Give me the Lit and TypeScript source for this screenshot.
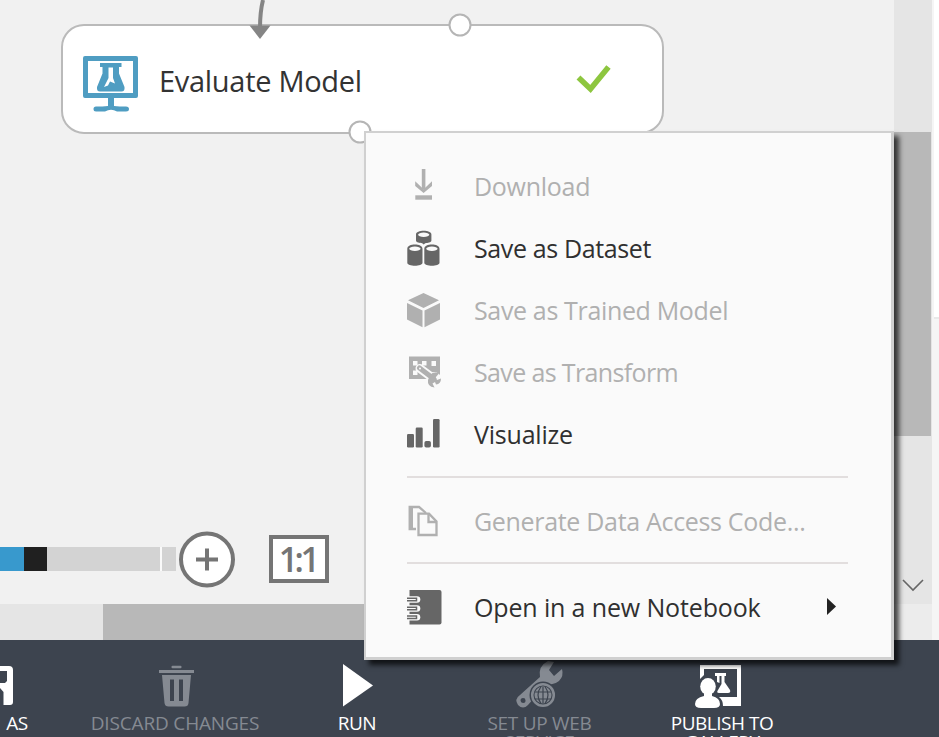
import { LitElement, html, css, svg, nothing } from "lit";
import { customElement, property } from "lit/decorators.js";
import { classMap } from "lit/directives/class-map.js";

const icons: Record<string, unknown> = {
  download: svg`<g fill="currentColor"><rect x="15.8" y="1" width="3.6" height="20"/><path d="M9.2 13.2l8.4 8 8.4-8v4.9l-8.4 7-8.4-7z"/><rect x="9.3" y="27.3" width="16.7" height="4.4"/></g>`,
  dataset: svg`<g fill="currentColor"><path d="M10 4.6c0-5 15.4-5 15.4 0v6c0 2-4 2.5-6.2 2.6L17.700 14.600l-1.500-1.400C14 13.100 10 12.600 10 10.600z"/><path d="M1.300 18.700c0-5.600 15.200-5.600 15.200 0v14c0 4-15.200 4-15.200 0zM18.300 18.700c0-5.600 15.200-5.600 15.200 0v14c0 4-15.200 4-15.200 0z"/></g><g fill="#fafafa"><ellipse cx="17.700" cy="4.700" rx="5.600" ry="2.200"/><ellipse cx="8.900" cy="18.700" rx="5.700" ry="2.200"/><ellipse cx="25.900" cy="18.700" rx="5.700" ry="2.200"/></g>`,
  cube: svg`<g fill="currentColor"><path d="M17.500 1L33 8.200 17.500 16 2 8.200zM1 11l15.500 7.600V35.300L1 27.500zM34 11l-15.500 7.600V35.300L34 27.500z"/></g>`,
  transform: svg`<path fill="currentColor" d="M3 2.500h31v22.500H3z"/><g fill="#fafafa"><rect x="7" y="7" width="4.500" height="4.500"/><rect x="16" y="7" width="4.500" height="4.500"/><rect x="25.500" y="7" width="4.500" height="5"/><rect x="7" y="16.500" width="4.500" height="4.500"/></g><g fill="none" stroke="#fafafa" stroke-linecap="round"><path d="M14 14.500L28 25" stroke-width="9"/><path d="M28 25L30 27" stroke-width="14"/></g><g stroke="currentColor" stroke-linecap="round" fill="currentColor"><path d="M13.500 14L28 25" stroke-width="5"/><path stroke="none" d="M24 21Q28 17 33 19.500L29.500 23.500 31 26 35 24.500Q35 30 30 30.500L29 28 26.500 29.500 28.500 33.500Q21 32.500 22 26z"/></g><circle cx="14" cy="14.500" r="1" fill="#fafafa"/>`,
  bars: svg`<g fill="currentColor"><rect x="1" y="18" width="7" height="13.500" rx="1.200"/><rect x="9.700" y="11.600" width="7" height="19.900" rx="1.200"/><rect x="18.400" y="25" width="6.500" height="6.500" rx="1.800"/><rect x="27" y="3" width="6.600" height="28.500" rx="1.200"/></g>`,
  code: svg`<g fill="none" stroke="currentColor" stroke-width="2.300"><path d="M10 26H3.700V4H13l7 6"/><path d="M5 5v20" stroke-width="4"/><path d="M12.500 10.700h10.500l7.500 7.800v13.500h-18z" fill="#fafafa"/><path d="M22.500 11v8h8"/></g>`,
  notebook: svg`<path fill="currentColor" d="M3.500 1H33.500a2 2 0 0 1 2 2V33.500a2 2 0 0 1-2 2H3.500z"/>${[10.5, 19.5, 28.3].map(
    (y) => svg`<path d="M1 ${y}H11" stroke="#fafafa" stroke-width="6.600" stroke-linecap="round"/><path d="M0 ${y}H3" stroke="#fafafa" stroke-width="6.600"/><path d="M1 ${y - 1.2}H10.500v2.400H1" fill="none" stroke="currentColor" stroke-width="1.500"/>`
  )}`,
};

interface Item { icon: string; label: string; ls: number; off?: boolean; more?: boolean }
const groups: Item[][] = [
  [
    { icon: "download", label: "Download", ls: -0.28, off: true },
    { icon: "dataset", label: "Save as Dataset", ls: -0.37 },
    { icon: "cube", label: "Save as Trained Model", ls: -0.35, off: true },
    { icon: "transform", label: "Save as Transform", ls: -0.64, off: true },
    { icon: "bars", label: "Visualize", ls: -0.2 },
  ],
  [{ icon: "code", label: "Generate Data Access Code...", ls: -0.32, off: true }],
  [{ icon: "notebook", label: "Open in a new Notebook", ls: -0.14, more: true }],
];

@customElement("context-menu")
class ContextMenu extends LitElement {
  static styles = css`
    :host { display: block; box-sizing: border-box; border: 2px solid #d0d0d0; border-right-width: 3px; border-bottom-width: 3px;
      background: #fafafa; padding: 22px 43px 0 41px; box-shadow: 5px 5px 5px rgba(0, 0, 0, 0.72); }
    .row { height: 62.2px; display: flex; align-items: center; color: #303030; font-size: 25px; white-space: nowrap; }
    .row.off { color: #b0b0b0; }
    .icon { width: 36px; height: 36px; flex: none; margin: -1px 32px 0 -1px; color: #666; }
    .off .icon { color: #b0b0b0; }
    .label { flex: 1; margin-top: -1px; }
    .more { width: 9px; height: 17px; margin: -2px 12px 0 0; fill: #222; }
    .sep { height: 2px; margin: 10px 0 12px; background: #e2dede; }
  `;
  render() {
    return groups.map((g, i) => html`
      ${i ? html`<div class="sep"></div>` : nothing}
      ${g.map((it) => html`<div class=${classMap({ row: true, off: !!it.off })}>
        <svg class="icon" viewBox="0 0 36 36">${icons[it.icon]}</svg>
        <span class="label" style="letter-spacing:${it.ls}px">${it.label}</span>
        ${it.more ? html`<svg class="more" viewBox="0 0 9 17"><path d="M0 0l9 8.500L0 17z"/></svg>` : nothing}
      </div>`)}`);
  }
}

@customElement("tool-button")
class ToolButton extends LitElement {
  @property() label = "";
  @property() second = "";
  @property({ type: Number }) spacing = 0;
  static styles = css`
    :host { display: flex; flex-direction: column; align-items: center; color: #fff; font-size: 19px; line-height: 19px; white-space: nowrap; }
    :host([off]) { color: #858a92; }
    .art { height: 50px; margin-bottom: 3px; }
  `;
  render() {
    return html`<div class="art"><slot></slot></div>
      ${[this.label, this.second].filter(Boolean).map((t) => html`<span style="letter-spacing:${this.spacing}px">${t}</span>`)}`;
  }
}

@customElement("app-root")
class AppRoot extends LitElement {
  static styles = css`
    :host { display: block; position: relative; width: 939px; height: 737px; overflow: hidden; background: #f1f1f1;
      font-family: "Open Sans", "Noto Sans", sans-serif; }
    .page { display: grid; grid-template: 604px 36px 97px / 894px 38px 7px; }
    .canvas { position: relative; background: #f1f1f1; overflow: hidden; }
    .wires { position: absolute; inset: 0; }
    .node { position: absolute; left: 61px; top: 24px; width: 603px; height: 110px; box-sizing: border-box; display: flex; align-items: center;
      border: 2px solid #bababa; border-radius: 23px; background: #fff; padding: 2px 50px 0 19px; }
    .monitor { width: 57px; height: 57px; margin-right: 20px; margin-top: 8px; }
    .name { flex: 1; font-size: 29px; color: #333; white-space: nowrap; letter-spacing: -0.3px; margin-top: 1px; }
    .check { width: 36px; height: 30px; margin-top: -3px; }
    .zoom { position: absolute; left: 0; top: 531px; height: 57px; display: flex; align-items: center; }
    .fill, .knob, .track, .cap { height: 24px; margin-top: -1px; background: #d3d3d3; }
    .fill { width: 24px; background: #3899cd; }
    .knob { width: 23px; background: #202020; }
    .track { width: 113px; border-right: 2px solid #fafafa; }
    .cap { width: 14px; margin-right: 3px; }
    .plus { width: 56px; height: 57px; }
    .ratio { box-sizing: border-box; width: 60px; height: 48px; margin: 0 0 1px 34px; border: 4px solid #757575; background: #fff; color: #757575;
      font: 600 34px/40px "Open Sans", sans-serif; text-align: center; letter-spacing: -3.500px; text-indent: -3px; }
    .vbar { background: #e5e5e5; display: flex; flex-direction: column; justify-content: space-between; }
    .vthumb { width: 37px; height: 304px; margin-top: 132px; background: #b8b8b8; }
    .chev { width: 22px; height: 14px; margin: 0 0 12px 8px; fill: none; stroke: #666; stroke-width: 1.6; }
    .edge { grid-row: 1 / 3; grid-column: 3; background: #f5f5f5; }
    .edge-top { height: 317px; margin-left: 2px; background: #fff; border-bottom: 2px solid #e9e9e9; }
    .hbar { background: #e5e5e5; display: flex; }
    .hthumb { margin-left: 103px; flex: 1; background: #b8b8b8; }
    .corner { background: #ececec; }
    .tools { grid-column: 1 / 4; background: #3d444f; display: grid; align-items: start; padding-top: 21px; height: 76px; overflow: hidden;
      grid-template-columns: 84px 182px 182px 183px 182px; }
    .tools tool-button { margin: 0 -20px; }
    .tools .save { margin: 0 0 0 -100px; word-spacing: 3px; }
    .save .glyph { margin-left: 3px; }
    .glyph { width: 50px; height: 50px; display: block; overflow: visible; }
    context-menu { position: absolute; left: 364px; top: 131px; width: 530px; height: 529px; }
  `;
  render() {
    return html`
      <div class="page">
        <div class="canvas">
          <div class="node">
            <svg class="monitor" viewBox="0 0 57 57" fill="#4f9dc2">
              <path fill-rule="evenodd" d="M3 0H54a2 2 0 0 1 2 2V40a2 2 0 0 1-2 2H32v8c4 .500 7 .500 12 .500q3 0 3 2.500t-3 2.500H35q-6-3.500-12 0H14q-2.500 0-2.500-2.500T14 50.500c5 0 8 0 12-.500v-8H3a2 2 0 0 1-2-2V2A2 2 0 0 1 3 0zM6 5V37H51V5z"/>
              <path fill-rule="evenodd" d="M18 7H39.500v4H37v6.500L42.500 31q.500 4.500-3 4.500H18q-3.500 0-3-4.500L20.500 17.500V11H18zM26.500 11.500V22l-4.500 9 4-1.500 2-4 5 2-2-5.500v-10.500z"/>
            </svg>
            <span class="name">Evaluate Model</span>
            <svg class="check" viewBox="0 0 36 30"><path d="M3 13.500L15 25 33 3" transform="translate(-.500 0)" fill="none" stroke="#8dc63f" stroke-width="5.600"/></svg>
          </div>
          <svg class="wires" width="894" height="160" fill="none">
            <path d="M263 0Q260 12 260 28" stroke="#858585" stroke-width="4"/>
            <path d="M249.500 25.500H270.500L260 39z" fill="#858585"/>
            <g fill="#fff" stroke="#b5b5b5" stroke-width="2"><circle cx="460" cy="25" r="10.500"/><circle cx="360" cy="132" r="10.500"/></g>
          </svg>
          <div class="zoom">
            <div class="fill"></div><div class="knob"></div><div class="track"></div><div class="cap"></div>
            <svg class="plus" viewBox="0 0 56 57"><circle cx="28" cy="28.500" r="26" fill="#fff" stroke="#757575" stroke-width="4"/><path d="M17 28.500H39M28 17.500V39.500" stroke="#757575" stroke-width="4"/></svg>
            <div class="ratio">1:1</div>
          </div>
        </div>
        <div class="vbar"><div class="vthumb"></div><svg class="chev" viewBox="0 0 22 14"><path d="M1 2l10 10L21 2"/></svg></div>
        <div class="edge"><div class="edge-top"></div></div>
        <div class="hbar"><div class="hthumb"></div></div>
        <div class="corner"></div>
        <div class="tools">
          <tool-button class="save" label="SAVE AS" spacing="-0.5">
            <svg class="glyph" viewBox="0 0 50 50"><path fill="#fff" fill-rule="evenodd" d="M6 5H40a4 4 0 0 1 4 4V41a3 3 0 0 1-3 3H6zM14 10V22H36L38 20V10zM14 27V44H20V33H27V44H34.500V31L31 27z"/></svg>
          </tool-button>
          <tool-button off label="DISCARD CHANGES" spacing="-0.17">
            <svg class="glyph" viewBox="0 0 50 50" fill="#858a92"><rect x="21.500" y="4.700" width="10" height="2.500" rx="1"/><rect x="9" y="9" width="35" height="3"/><path fill-rule="evenodd" d="M12 14H41L38.500 42q-.300 3.500-4 3.500h-16q-3.500 0-4-3.500zM20 18.500V40h4V18.500zM29 18.500V40h4V18.500z"/></svg>
          </tool-button>
          <tool-button label="RUN" spacing="-0.5">
            <svg class="glyph" viewBox="0 0 50 50"><path fill="#fff" d="M11 3L41 24.500 11 45.500z"/></svg>
          </tool-button>
          <tool-button off label="SET UP WEB" second="SERVICE" spacing="-0.28">
            <svg class="glyph" viewBox="0 0 50 50" fill="#858a92">
              <path fill-rule="evenodd" d="M25 16Q23 5 33 0L39 1 34 9 39 15 47 8Q49 15 44 20 38 25 32 22L13 44Q8 49 3 44-1 38 5 34zM8 37a2.500 2.500 0 1 0 .1 5A2.500 2.500 0 0 0 8 37z"/>
              <circle cx="28" cy="34" r="13.500" fill="#3d444f"/><circle cx="28" cy="34" r="10.800" fill="none" stroke="#858a92" stroke-width="2.500"/>
              <circle cx="28" cy="34" r="8.500"/><path d="M20 31H36M20 38H36M26 25.500Q20 34 26 42.500M30 25.500Q36 34 30 42.500M28 26V42.500" fill="none" stroke="#3d444f" stroke-width="1.200"/>
            </svg>
          </tool-button>
          <tool-button label="PUBLISH TO" second="GALLERY" spacing="-0.48">
            <svg class="glyph" viewBox="0 0 50 50" fill="#fff">
              <path d="M3 4H44V45H26Q26 39 22 36H40V8H7V14L3 18z"/>
              <ellipse cx="11" cy="25.500" rx="7.800" ry="8.500"/><path d="M7 31H15V35Q23 37 23 43 23 47 17 47H4Q-2 47-2 43-2 37 7 35z"/>
              <path d="M18 12H29V15H27.500V21L33 29Q34 32 31 32H22Q19 32 21 29L24.500 23V15H22.500V22L20 21V15H18z"/>
            </svg>
          </tool-button>
        </div>
      </div>
      <context-menu></context-menu>`;
  }
}
